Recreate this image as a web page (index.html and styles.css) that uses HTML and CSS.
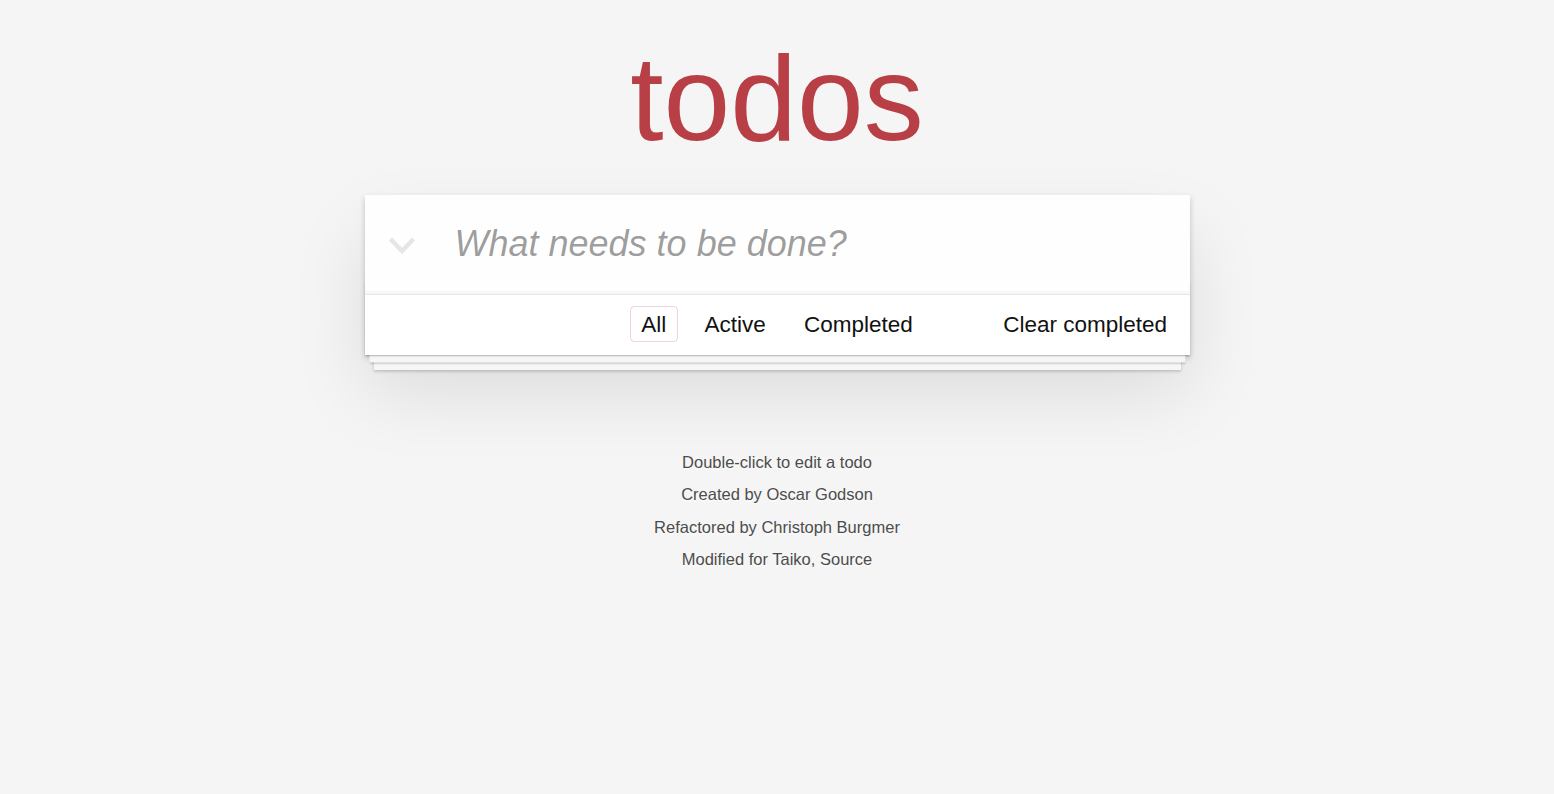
FILE: index.html
```html
<!DOCTYPE html>
<html lang="en">
<head>
<meta charset="utf-8">
<title>Taiko • TodoMVC</title>
<link rel="stylesheet" href="styles.css">
</head>
<body>
<div class="page">
  <h1 class="title">todos</h1>
  <section class="todoapp">
    <header class="header">
      <label class="toggle-all" aria-label="Mark all as complete">
        <svg class="chevron" width="28" height="19" viewBox="0 0 28 19" aria-hidden="true">
          <polyline points="2.5,3 14,15 25.5,3" fill="none" stroke="#e6e6e6" stroke-width="4.5" stroke-linecap="butt" stroke-linejoin="miter"/>
        </svg>
      </label>
      <input class="new-todo" placeholder="What needs to be done?" autofocus>
    </header>
    <footer class="footer">
      <span class="todo-count"></span>
      <ul class="filters">
        <li><a href="#/" class="selected">All</a></li>
        <li><a href="#/active">Active</a></li>
        <li><a href="#/completed">Completed</a></li>
      </ul>
      <button class="clear-completed">Clear completed</button>
    </footer>
  </section>
  <footer class="info">
    <p>Double-click to edit a todo</p>
    <p>Created by Oscar Godson</p>
    <p>Refactored by Christoph Burgmer</p>
    <p>Modified for Taiko, Source</p>
  </footer>
</div>
</body>
</html>
```

FILE: styles.css
```css
html,
body {
  margin: 0;
  padding: 0;
}

body {
  background: #f5f5f5;
  color: #111111;
  font-family: "Liberation Sans", Arial, Helvetica, sans-serif;
  font-size: 21px;
  line-height: 29.4px;
  font-weight: 400;
}

.page {
  max-width: 825px;
  margin: 0 auto;
  display: flex;
  flex-direction: column;
}

.title {
  margin: 38px 0 37px;
  font-size: 120px;
  line-height: 120px;
  font-weight: 400;
  text-align: center;
  color: #b83f45;
}

.todoapp {
  background: #fff;
  box-shadow: 0 3px 6px 0 rgba(0, 0, 0, 0.2),
    0 37.5px 75px 0 rgba(0, 0, 0, 0.1);
}

.header {
  display: flex;
  height: 98.5px;
  background: rgba(0, 0, 0, 0.003);
  box-shadow: inset 0 -3px 1.5px rgba(0, 0, 0, 0.03);
}

.toggle-all {
  width: 90px;
  flex: none;
  box-sizing: border-box;
  padding: 41px 0 0 23px;
}

.chevron {
  display: block;
}

.new-todo {
  flex: 1;
  min-width: 0;
  border: 0;
  margin: 0;
  padding: 24px 24px 24px 0;
  background: transparent;
  font-family: inherit;
  font-size: 36px;
  line-height: 50.4px;
  color: inherit;
  outline: none;
}

.new-todo::placeholder {
  font-style: italic;
  font-weight: 400;
  color: rgba(0, 0, 0, 0.4);
}

.footer {
  position: relative;
  display: grid;
  grid-template-columns: 1fr auto 1fr;
  align-items: start;
  height: 30px;
  padding: 15px 22.5px;
  border-top: 1.5px solid #e6e6e6;
  font-size: 22.5px;
}

.footer::before {
  content: "";
  position: absolute;
  right: 0;
  bottom: 0;
  left: 0;
  height: 75px;
  overflow: hidden;
  pointer-events: none;
  box-shadow: 0 1.5px 1.5px rgba(0, 0, 0, 0.2),
    0 12px 0 -4.5px #f6f6f6,
    0 13.5px 1.5px -4.5px rgba(0, 0, 0, 0.2),
    0 24px 0 -9px #f6f6f6,
    0 25.5px 3px -9px rgba(0, 0, 0, 0.2);
}

.filters {
  margin: 0;
  padding: 0;
  list-style: none;
  text-align: center;
  white-space: nowrap;
}

.filters li {
  display: inline;
}

.filters a {
  margin: 4.5px;
  padding: 4.5px 10.5px;
  border: 1.5px solid transparent;
  border-radius: 4.5px;
  color: inherit;
  text-decoration: none;
}

.filters a.selected {
  border-color: rgba(175, 47, 47, 0.2);
}

.clear-completed {
  justify-self: end;
  margin: 0;
  padding: 0;
  border: 0;
  background: none;
  font: inherit;
  line-height: 30px;
  color: inherit;
  cursor: pointer;
}

.info {
  margin-top: 91px;
  color: #4d4d4d;
  font-size: 16.5px;
  text-align: center;
  text-shadow: 0 1.5px 0 rgba(255, 255, 255, 0.5);
}

.info p {
  margin: 0;
  line-height: 32.5px;
}
```
